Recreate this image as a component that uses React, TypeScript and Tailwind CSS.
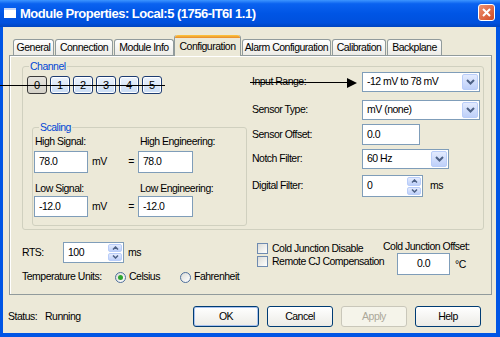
import type { ReactNode } from "react";

const ui = "font-['Liberation_Sans',Arial,sans-serif] tracking-[-0.5px]";

function Chevron() {
  return (
    <svg width="9" height="6" viewBox="0 0 9 6">
      <path d="M1 1 L4.5 4.5 L8 1" fill="none" stroke="#4D6185" strokeWidth="2" />
    </svg>
  );
}

function TextBox({ value, className, center }: { value: string; className: string; center?: boolean }) {
  return (
    <div
      className={`flex items-center border border-[#7F9DB9] bg-white text-[10.5px] text-black ${
        center ? "justify-center" : "pl-[4px]"
      } ${className}`}
    >
      {value}
    </div>
  );
}

function Combo({ value, className }: { value: string; className: string }) {
  return (
    <div className={`flex h-[20px] items-stretch border border-[#7F9DB9] bg-white p-[1px] ${className}`}>
      <span className="flex flex-1 items-center pl-[3px] text-[10.5px] text-black">{value}</span>
      <span className="flex w-[16px] items-center justify-center rounded-[2px] border border-[#B9CDF9] bg-[linear-gradient(to_bottom,#E3EBFE,#BED0F9)]">
        <Chevron />
      </span>
    </div>
  );
}

function Spin({ value, className }: { value: string; className: string }) {
  return (
    <div className={`flex items-stretch border border-[#7F9DB9] bg-white p-[1px] ${className}`}>
      <span className="flex flex-1 items-center pl-[3px] text-[10.5px] text-black">{value}</span>
      <span className="flex w-[14px] flex-col gap-[1px]">
        <span className="flex flex-1 items-center justify-center rounded-[2px] border border-[#B9CDF9] bg-[linear-gradient(to_bottom,#E3EBFE,#BED0F9)]">
          <svg width="7" height="4" viewBox="0 0 7 4">
            <path d="M1 3.5 L3.5 1 L6 3.5" fill="none" stroke="#4D6185" strokeWidth="1.5" />
          </svg>
        </span>
        <span className="flex flex-1 items-center justify-center rounded-[2px] border border-[#B9CDF9] bg-[linear-gradient(to_bottom,#E3EBFE,#BED0F9)]">
          <svg width="7" height="4" viewBox="0 0 7 4">
            <path d="M1 0.5 L3.5 3 L6 0.5" fill="none" stroke="#4D6185" strokeWidth="1.5" />
          </svg>
        </span>
      </span>
    </div>
  );
}

function Group({ label, className, children }: { label: string; className: string; children: ReactNode }) {
  return (
    <div className={`relative rounded-[3px] border border-[#D0D0BF] ${className}`}>
      <span className="absolute -top-[8px] left-[6px] bg-[#ECE9D8] px-[1px] text-[10.5px] leading-[14px] text-[#0046D5]">
        {label}
      </span>
      {children}
    </div>
  );
}

function Tab({ label, className, active }: { label: string; className: string; active?: boolean }) {
  if (active) {
    return (
      <div
        className={`relative z-10 -mb-[1px] flex h-[21px] flex-col rounded-t-[3px] border-x border-[#919B9C] bg-[#ECE9D8] ${className}`}
      >
        <span className="h-[3px] rounded-t-[3px] bg-[linear-gradient(to_bottom,#FFC83C,#E68B2C)]" />
        <span className="flex flex-1 items-center justify-center text-[10.5px] text-black">{label}</span>
      </div>
    );
  }
  return (
    <div
      className={`flex h-[16px] items-center justify-center rounded-t-[3px] border-x border-t border-[#919B9C] bg-[linear-gradient(to_bottom,#FFFFFF,#ECEBE6)] text-[10.5px] text-black ${className}`}
    >
      {label}
    </div>
  );
}

function ChannelButton({ n, selected }: { n: number; selected?: boolean }) {
  return (
    <div
      className={`flex h-[18px] w-[20px] items-center justify-center rounded-[3px] border text-[11px] tracking-normal text-black ${
        selected
          ? "border-[#3A3A3A] bg-[linear-gradient(to_bottom,#E6E4DE,#D4D1C8)]"
          : "border-[#1D3C72] bg-[linear-gradient(to_bottom,#EEF4FC,#C9DCF4)] shadow-[inset_0_0_0_1px_#FFFFFF]"
      }`}
    >
      {n}
    </div>
  );
}

function Button({ label, isDefault, disabled, className }: { label: string; isDefault?: boolean; disabled?: boolean; className: string }) {
  return (
    <div
      className={`flex h-[21px] items-center justify-center rounded-[3px] border text-[10.5px] ${
        disabled
          ? "border-[#C9C7BA] bg-[#F5F4EA] text-[#ACA899]"
          : "border-[#003C74] bg-[linear-gradient(to_bottom,#FFFFFF,#ECEBE6)] text-black"
      } ${isDefault ? "shadow-[inset_0_0_0_1px_#A9C2EE]" : ""} ${className}`}
    >
      {label}
    </div>
  );
}

function Check() {
  return <span className="h-[11px] w-[11px] shrink-0 border border-[#6F8BB0] bg-[linear-gradient(135deg,#DCDCD7,#FFFFFF)]" />;
}

function Radio({ checked }: { checked?: boolean }) {
  return (
    <span className="flex h-[11px] w-[11px] shrink-0 items-center justify-center rounded-full border border-[#4F6F9C] bg-[linear-gradient(135deg,#DCDCD7,#FFFFFF)]">
      {checked && <span className="h-[5px] w-[5px] rounded-full bg-[#2FA52F]" />}
    </span>
  );
}

export default function App() {
  return (
    <div className={`relative flex h-[337px] w-[500px] flex-col overflow-hidden bg-[#0055E5] ${ui}`}>
      {/* title bar */}
      <div className="flex h-[27px] items-start bg-[linear-gradient(to_bottom,#3D95FF_0%,#0A62F0_14%,#0055E5_50%,#0050DD_85%,#0045C0_100%)] pl-[4px] pr-[5px]">
        <span className="mt-[8px] h-[10px] w-[12px] border-t-[2px] border-[#C8D8F8] bg-white" />
        <span className="ml-[4px] mt-[5px] text-[13px] font-bold leading-[18px] text-white">
          Module Properties: Local:5 (1756-IT6I 1.1)
        </span>
        <span className="ml-auto mt-[4px] flex h-[17px] w-[17px] items-center justify-center rounded-[3px] border border-white bg-[linear-gradient(135deg,#EE9270,#D24A24)]">
          <svg width="9" height="9" viewBox="0 0 9 9">
            <path d="M1 1 L8 8 M8 1 L1 8" stroke="#FFFFFF" strokeWidth="2" />
          </svg>
        </span>
      </div>

      {/* body */}
      <div className="mb-[4px] ml-[3px] mr-[4px] flex flex-1 flex-col bg-[#ECE9D8] text-[10.5px] text-black">
        <div className="flex h-[28px] items-end pl-[10px]">
          <Tab label="General" className="w-[41px]" />
          <Tab label="Connection" className="ml-[1px] w-[58px]" />
          <Tab label="Module Info" className="ml-[1px] w-[60px]" />
          <Tab label="Configuration" className="w-[67px]" active />
          <Tab label="Alarm Configuration" className="ml-[1px] w-[89px]" />
          <Tab label="Calibration" className="ml-[1px] w-[54px]" />
          <Tab label="Backplane" className="ml-[1px] w-[55px]" />
        </div>

        {/* tab page */}
        <div className="ml-[6px] h-[240px] w-[483px] border border-[#919B9C] shadow-[inset_1px_1px_0_#FFFFFF]">
          <Group label="Channel" className="ml-[12px] mt-[10px] flex h-[164px] w-[462px]">
            <div className="flex w-[226px] flex-col">
              <div className="ml-[4px] mt-[9px] flex gap-[3px]">
                <ChannelButton n={0} selected />
                <ChannelButton n={1} />
                <ChannelButton n={2} />
                <ChannelButton n={3} />
                <ChannelButton n={4} />
                <ChannelButton n={5} />
              </div>
              <Group label="Scaling" className="ml-[9px] mt-[33px] h-[99px] w-[215px] pl-[1px] pt-[7px]">
                <div className="flex h-[14px] items-center">
                  <span className="w-[104px] pl-[1px]">High Signal:</span>
                  <span className="pl-[2px]">High Engineering:</span>
                </div>
                <div className="mt-[2px] flex items-center">
                  <TextBox value="78.0" className="h-[22px] w-[54px]" />
                  <span className="ml-[4px] w-[34px]">mV</span>
                  <span className="w-[10px] text-center">=</span>
                  <TextBox value="78.0" className="ml-[2px] h-[22px] w-[55px]" />
                </div>
                <div className="mt-[9px] flex h-[14px] items-center">
                  <span className="w-[104px] pl-[1px]">Low Signal:</span>
                  <span className="pl-[2px]">Low Engineering:</span>
                </div>
                <div className="flex items-center">
                  <TextBox value="-12.0" className="h-[21px] w-[54px]" />
                  <span className="ml-[4px] w-[34px]">mV</span>
                  <span className="w-[10px] text-center">=</span>
                  <TextBox value="-12.0" className="ml-[2px] h-[21px] w-[55px]" />
                </div>
              </Group>
            </div>

            <div className="ml-[3px] flex flex-col">
              <div className="mt-[5px] flex h-[20px] items-center">
                <span className="w-[110px]">Input Range:</span>
                <Combo value="-12 mV to 78 mV" className="w-[118px]" />
              </div>
              <div className="mt-[8px] flex h-[20px] items-center">
                <span className="w-[110px]">Sensor Type:</span>
                <Combo value="mV (none)" className="w-[118px]" />
              </div>
              <div className="mt-[4px] flex h-[21px] items-center">
                <span className="w-[110px]">Sensor Offset:</span>
                <TextBox value="0.0" className="h-[21px] w-[58px]" />
              </div>
              <div className="mt-[4px] flex h-[20px] items-center">
                <span className="w-[110px]">Notch Filter:</span>
                <Combo value="60 Hz" className="w-[87px]" />
              </div>
              <div className="mt-[6px] flex h-[22px] items-center">
                <span className="w-[110px]">Digital Filter:</span>
                <Spin value="0" className="h-[22px] w-[61px]" />
                <span className="ml-[7px]">ms</span>
              </div>
            </div>
          </Group>

          <div className="flex">
            <div className="ml-[12px] flex w-[235px] flex-col">
              <div className="mt-[12px] flex h-[21px] items-center">
                <span className="w-[41px]">RTS:</span>
                <Spin value="100" className="h-[21px] w-[61px]" />
                <span className="ml-[4px]">ms</span>
              </div>
              <div className="mt-[7px] flex h-[14px] items-center">
                <span className="w-[93px]">Temperature Units:</span>
                <Radio checked />
                <span className="ml-[3px] w-[51px]">Celsius</span>
                <Radio />
                <span className="ml-[3px]">Fahrenheit</span>
              </div>
            </div>
            <div className="flex w-[126px] flex-col">
              <div className="mt-[12px] flex h-[13px] items-center">
                <Check />
                <span className="ml-[4px] whitespace-nowrap">Cold Junction Disable</span>
              </div>
              <div className="flex h-[13px] items-center">
                <Check />
                <span className="ml-[4px] whitespace-nowrap">Remote CJ Compensation</span>
              </div>
            </div>
            <div className="flex flex-col">
              <div className="mt-[11px] flex h-[12px] items-center whitespace-nowrap">Cold Junction Offset:</div>
              <div className="ml-[14px] flex items-center">
                <TextBox value="0.0" center className="h-[22px] w-[53px]" />
                <span className="ml-[5px] mt-[2px]">°C</span>
              </div>
            </div>
          </div>
        </div>

        {/* footer */}
        <div className="mt-[11px] flex h-[21px] items-center pl-[5px]">
          <span className="w-[37px]">Status:</span>
          <span className="w-[148px]">Running</span>
          <div className="flex gap-[8px]">
            <Button label="OK" isDefault className="w-[66px]" />
            <Button label="Cancel" className="w-[66px]" />
            <Button label="Apply" disabled className="w-[66px]" />
            <Button label="Help" className="w-[66px]" />
          </div>
        </div>
      </div>

      {/* annotation arrows drawn over the dialog */}
      <span className="absolute left-0 top-[85px] h-[1px] w-[165px] bg-black" />
      <span className="absolute left-[250px] top-[82px] h-[1px] w-[98px] bg-black" />
      <svg className="absolute left-[347px] top-[78px]" width="10" height="10" viewBox="0 0 10 10">
        <path d="M0 0 L10 5 L0 10 Z" fill="#000000" />
      </svg>
    </div>
  );
}
